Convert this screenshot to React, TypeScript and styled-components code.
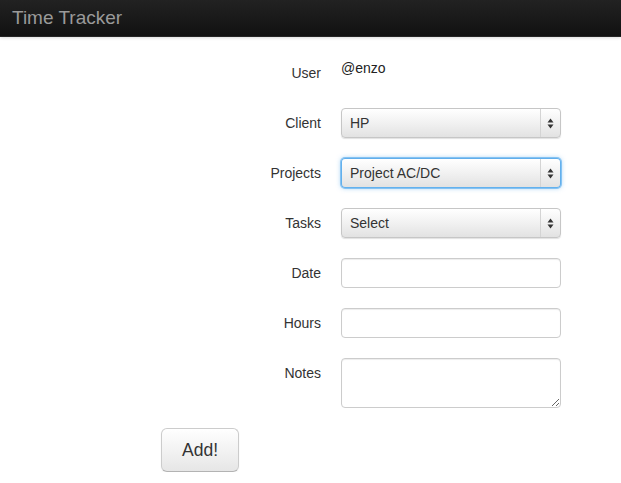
import React from 'react';
import styled, { createGlobalStyle, css } from 'styled-components';

const GlobalStyle = createGlobalStyle`
  html, body {
    margin: 0;
    padding: 0;
    background: #fff;
  }
  body {
    font-family: 'Liberation Sans', Arial, sans-serif;
    font-size: 14px;
    line-height: 20px;
    color: #333;
  }
`;

function Arrows() {
  return (
    <svg width="7" height="11" viewBox="0 0 7 11">
      <path d="M3.5 0.5 L6.5 4.5 L0.5 4.5 Z" fill="#333" />
      <path d="M3.5 10.5 L6.5 6.5 L0.5 6.5 Z" fill="#333" />
    </svg>
  );
}

function FakeSelect({ value, focused }: { value: string; focused?: boolean }) {
  return (
    <SelectBox $focused={focused}>
      <SelectText>{value}</SelectText>
      <ArrowCell>
        <Arrows />
      </ArrowCell>
    </SelectBox>
  );
}

export default function App() {
  return (
    <>
      <GlobalStyle />
      <Navbar>
        <Brand>Time Tracker</Brand>
      </Navbar>
      <Form>
        <Group>
          <Label>User</Label>
          <Controls>
            <StaticText>@enzo</StaticText>
          </Controls>
        </Group>
        <Group>
          <Label>Client</Label>
          <Controls>
            <FakeSelect value="HP" />
          </Controls>
        </Group>
        <Group>
          <Label>Projects</Label>
          <Controls>
            <FakeSelect value="Project AC/DC" focused />
          </Controls>
        </Group>
        <Group>
          <Label>Tasks</Label>
          <Controls>
            <FakeSelect value="Select" />
          </Controls>
        </Group>
        <Group>
          <Label>Date</Label>
          <Controls>
            <TextInput type="text" />
          </Controls>
        </Group>
        <Group>
          <Label>Hours</Label>
          <Controls>
            <TextInput type="text" />
          </Controls>
        </Group>
        <Group>
          <Label>Notes</Label>
          <Controls>
            <TextArea />
          </Controls>
        </Group>
        <Actions>
          <Button type="button">Add!</Button>
        </Actions>
      </Form>
    </>
  );
}

const Navbar = styled.div`
  height: 37px;
  box-sizing: border-box;
  background: linear-gradient(#222222, #111111);
  border-bottom: 1px solid #252525;
  box-shadow: 0 1px 3px rgba(0, 0, 0, 0.15);
  display: flex;
  align-items: center;
  padding-left: 12px;
`;

const Brand = styled.span`
  font-size: 19px;
  font-weight: 300;
  color: #9a9a9a;
`;

const Form = styled.form`
  padding: 21px 0 0 161px;
  display: flex;
  flex-direction: column;
  gap: 20px;
`;

const Group = styled.div`
  display: flex;
  gap: 20px;
  min-height: 30px;
`;

const Label = styled.label`
  width: 160px;
  text-align: right;
  padding-top: 5px;
  line-height: 20px;
`;

const Controls = styled.div`
  width: 220px;
  display: flex;
  flex-direction: column;
`;

const StaticText = styled.div`
  line-height: 20px;
  color: #222;
`;

const SelectBox = styled.div<{ $focused?: boolean }>`
  height: 30px;
  box-sizing: border-box;
  display: flex;
  align-items: stretch;
  border: 1px solid #c6c6c6;
  border-radius: 4px;
  background: linear-gradient(#ffffff, #f1f1f1 50%, #e2e2e2);
  box-shadow: 0 1px 1px rgba(0, 0, 0, 0.12);
  ${p =>
    p.$focused &&
    css`
      border-color: rgba(82, 168, 236, 0.9);
      box-shadow: 0 0 0 1px rgba(82, 168, 236, 0.6), 0 0 5px rgba(82, 168, 236, 0.6);
    `}
`;

const SelectText = styled.span`
  flex: 1;
  padding-left: 8px;
  line-height: 28px;
  color: #333;
`;

const ArrowCell = styled.span`
  width: 19px;
  border-left: 1px solid #d4d4d4;
  display: flex;
  align-items: center;
  justify-content: center;
`;

const fieldBase = css`
  width: 220px;
  box-sizing: border-box;
  border: 1px solid #cccccc;
  border-radius: 4px;
  box-shadow: inset 0 1px 1px rgba(0, 0, 0, 0.075);
  font-family: 'Liberation Sans', Arial, sans-serif;
  font-size: 14px;
  padding: 4px 6px;
  margin: 0;
  outline: none;
  background: #fff;
`;

const TextInput = styled.input`
  ${fieldBase};
  height: 30px;
`;

const TextArea = styled.textarea`
  ${fieldBase};
  height: 50px;
  display: block;
`;

const Actions = styled.div`
  display: flex;
`;

const Button = styled.button`
  font-family: 'Liberation Sans', Arial, sans-serif;
  font-size: 17.5px;
  line-height: 20px;
  color: #333;
  padding: 11px 20px;
  border: 1px solid #cccccc;
  border-bottom-color: #b3b3b3;
  border-radius: 6px;
  background: linear-gradient(#ffffff, #e6e6e6);
  box-shadow: inset 0 1px 0 rgba(255, 255, 255, 0.2), 0 1px 2px rgba(0, 0, 0, 0.05);
  cursor: pointer;
`;
